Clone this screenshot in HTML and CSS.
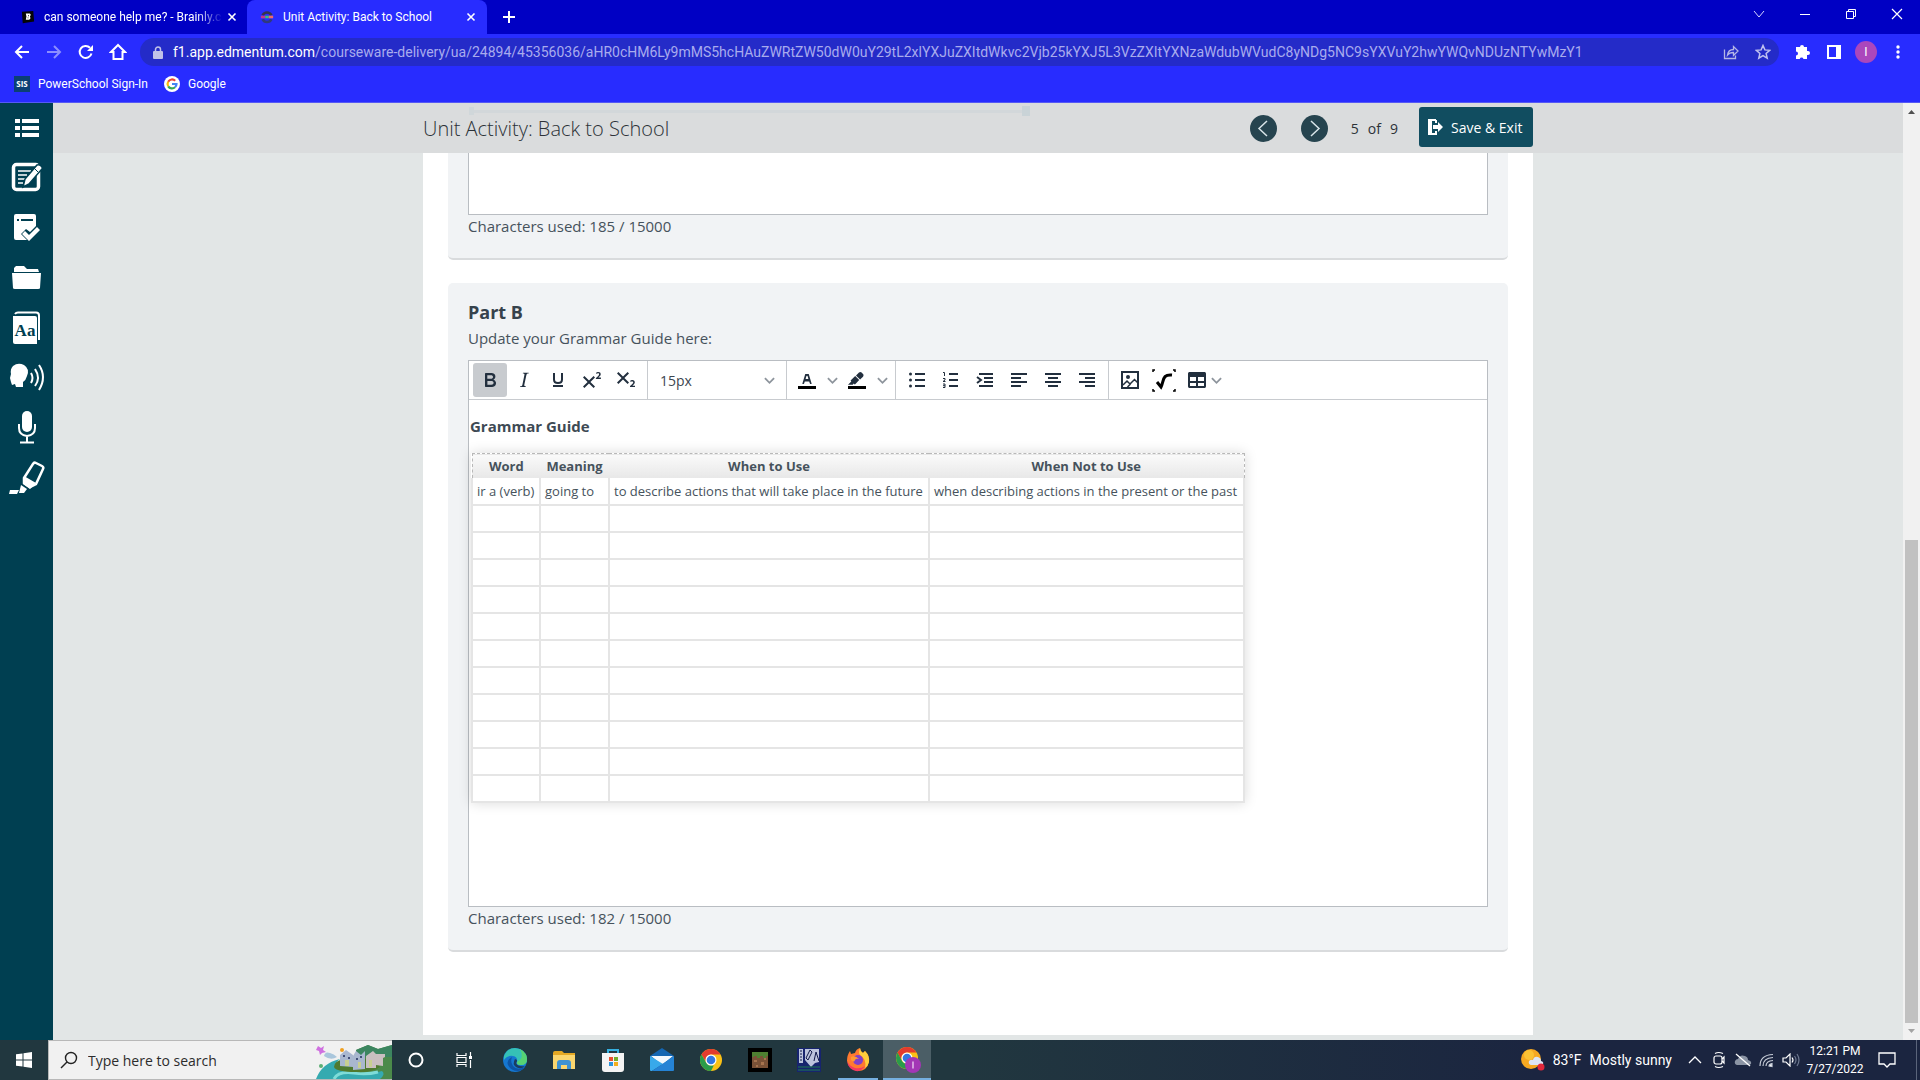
FILE: index.html
```html
<!DOCTYPE html>
<html lang="en">
<head>
<meta charset="utf-8">
<title>Unit Activity: Back to School</title>
<link rel="stylesheet" href="styles.css">
</head>
<body>
<header class="browser">
  <div class="tabstrip">
    <div class="tab">
      <svg class="favicon" viewBox="0 0 16 16"><path d="M1 2l13-1 1 12-13 2z" fill="#050505"/><path d="M5.500 4h4.500q1.500.5 1 2l-.8 1.500q1.600 3-1.200 3.500H5.500l.7-3.500z" fill="#fff"/><path d="M8 6h1v1H8zM7.500 8.500h1v1h-1z" fill="#050505"/></svg>
      <span class="tab-title tab-fade">can someone help me? - Brainly.c</span>
      <button class="plain" aria-label="Close tab"><svg width="10" height="10" viewBox="0 0 10 10"><path d="M1.500 1.500l7 7M8.500 1.500l-7 7" stroke="#fff" stroke-width="1.600"/></svg></button>
    </div>
    <div class="tab tab-active">
      <svg class="favicon" viewBox="0 0 16 16" fill="none" stroke-width="3"><path d="M3 6a5.500 5.500 0 0 1 10 0" stroke="#35344f"/><path d="M3 10.500a5.500 5.500 0 0 0 10 0" stroke="#303a7c"/><path d="M1 8h5" stroke="#c2388f"/><path d="M6 8h4" stroke="#3bc07c"/><path d="M10 8h5" stroke="#ed6b68"/></svg>
      <span class="tab-title">Unit Activity: Back to School</span>
      <button class="plain" aria-label="Close tab"><svg width="10" height="10" viewBox="0 0 10 10"><path d="M1.500 1.500l7 7M8.500 1.500l-7 7" stroke="#fff" stroke-width="1.600"/></svg></button>
    </div>
    <button class="plain newtab" aria-label="New tab"><svg width="12" height="12" viewBox="0 0 12 12"><path d="M6 0v12M0 6h12" stroke="#fff" stroke-width="2"/></svg></button>
    <div class="winctl">
      <button class="plain" aria-label="Search tabs"><svg width="12" height="12" viewBox="0 0 12 12"><path d="M1 3l5 6 5-6" fill="none" stroke="#d5d5ff"/></svg></button>
      <button class="plain" aria-label="Minimize"><svg width="12" height="12" viewBox="0 0 12 12"><path d="M1 6.500h10" stroke="#fff"/></svg></button>
      <button class="plain" aria-label="Restore"><svg width="12" height="12" viewBox="0 0 12 12"><path d="M1.500 3.500h7v7h-7zM3.500 3.500v-2h7v7h-2" fill="none" stroke="#fff"/></svg></button>
      <button class="plain" aria-label="Close"><svg width="12" height="12" viewBox="0 0 12 12"><path d="M1 1l10 10M11 1L1 11" stroke="#fff" stroke-width="1.200"/></svg></button>
    </div>
  </div>
  <nav class="toolbar">
    <button class="plain nav" aria-label="Back"><svg width="16" height="16" viewBox="0 0 16 16"><path d="M15 8H2M8 2L2 8l6 6" fill="none" stroke="#fff" stroke-width="2"/></svg></button>
    <button class="plain nav" aria-label="Forward"><svg width="16" height="16" viewBox="0 0 16 16"><path d="M1 8h13M8 2l6 6-6 6" fill="none" stroke="#8c8eff" stroke-width="2"/></svg></button>
    <button class="plain nav" aria-label="Reload"><svg width="16" height="16" viewBox="0 0 16 16"><path d="M13.500 9.500A6 6 0 1 1 12 3.700" fill="none" stroke="#fff" stroke-width="2"/><path d="M15 1v6H9z" fill="#fff"/></svg></button>
    <button class="plain nav" aria-label="Home"><svg width="18" height="18" viewBox="0 0 18 18"><path d="M9 2L2 9h2.500v7h9V9H16z" fill="none" stroke="#fff" stroke-width="2"/></svg></button>
    <div class="omnibox">
      <svg width="10" height="13" viewBox="0 0 10 13"><rect y="5" width="10" height="8" rx="1" fill="#c0c2e8"/><path d="M2.500 5V3.500a2.500 2.500 0 0 1 5 0V5" fill="none" stroke="#c0c2e8" stroke-width="1.500"/></svg>
      <label class="host" for="url">f1.app.edmentum.com</label>
      <input id="url" class="url" type="text" value="/courseware-delivery/ua/24894/45356036/aHR0cHM6Ly9mMS5hcHAuZWRtZW50dW0uY29tL2xlYXJuZXItdWkvc2Vjb25kYXJ5L3VzZXItYXNzaWdubWVudC8yNDg5NC9sYXVuY2hwYWQvNDUzNTYwMzY1">
      <button class="plain nav" aria-label="Share"><svg width="16" height="16" viewBox="0 0 16 16" fill="none" stroke="#b4b6e6" stroke-width="1.300"><path d="M1.500 5.500v9h11v-3"/><path d="M4.500 11c.5-4 3-5.500 6-5.500V2.500l4.500 4.500-4.500 4.500V8.500c-3 0-4.500.5-6 2.500z"/></svg></button>
      <button class="plain nav" aria-label="Bookmark"><svg width="16" height="16" viewBox="0 0 16 16"><path d="M8 1.500l1.900 4.400 4.800.4-3.600 3.200 1.100 4.700L8 11.700l-4.200 2.500 1.100-4.700L1.300 6.300l4.800-.4z" fill="none" stroke="#c0c2f0" stroke-width="1.500"/></svg></button>
    </div>
    <button class="plain nav" aria-label="Extensions"><svg width="16" height="16" viewBox="0 0 16 16"><path d="M6 3a2 2 0 0 1 4 0h3v4h1a2 2 0 0 1 0 4h-1v4H9.500a2 2 0 0 0-3.800 0H2v-3.500a2 2 0 0 0 0-4V3z" fill="#fff"/></svg></button>
    <button class="plain nav" aria-label="Side panel"><svg width="14" height="14" viewBox="0 0 14 14"><path d="M1 1h12v12H1z" fill="none" stroke="#fff" stroke-width="2"/><path d="M9 1h4v12H9z" fill="#fff"/></svg></button>
    <button class="plain nav" aria-label="Profile"><span class="avatar">I</span></button>
    <button class="plain nav" aria-label="Menu"><svg width="4" height="14" viewBox="0 0 4 14" fill="#fff"><circle cx="2" cy="2" r="1.700"/><circle cx="2" cy="7" r="1.700"/><circle cx="2" cy="12" r="1.700"/></svg></button>
  </nav>
  <nav class="bookmarks">
    <a href="#"><svg width="16" height="16" viewBox="0 0 16 16"><rect width="16" height="16" fill="#0b3f74"/><text x="8" y="11" class="sis">SIS</text></svg>PowerSchool Sign-In</a>
    <a href="#"><svg width="16" height="16" viewBox="0 0 16 16" fill="none" stroke-width="2.200"><circle cx="8" cy="8" r="8" fill="#fff"/><path d="M4.200 5.700a4.500 4.500 0 0 1 7-1" stroke="#ea4335"/><path d="M4.200 10.300a4.500 4.500 0 0 1 0-4.600" stroke="#fbbc05"/><path d="M4.200 10.300a4.500 4.500 0 0 0 6.800 1" stroke="#34a853"/><path d="M8 8h4.500a4.500 4.500 0 0 1-1.500 3.300" stroke="#4285f4"/></svg>Google</a>
  </nav>
</header>

<div class="viewport">
  <aside class="rail">
    <button class="plain" aria-label="Contents"><svg viewBox="0 0 54 50" fill="#fff"><path d="M15 16h5v4h-5zM22 16h17v4H22zM15 23h5v4h-5zM22 23h17v4H22zM15 30h5v4h-5zM22 30h17v4H22z"/></svg></button>
    <button class="plain" aria-label="Notes"><svg viewBox="0 0 54 50"><rect x="13.500" y="11.500" width="25" height="25" rx="3" fill="none" stroke="#fff" stroke-width="3.500"/><path d="M18 18h13M18 22h9M18 26h7M18 30h5" stroke="#fff" stroke-width="1.500"/><path d="M23 34l2-8 12-14q3-1 5 2 1 2-1 3L29 31z" fill="#fff" stroke="#003f51" stroke-width="1.500"/><path d="M34 15l4 4" stroke="#003f51"/></svg></button>
    <button class="plain" aria-label="Assignments"><svg viewBox="0 0 54 50"><path d="M14 13q0-2 2-2h18q2 0 2 2v10l-6 6-4-3-5 5 6 6H16q-2 0-2-2z" fill="#fff"/><path d="M17 17h2M21 17h12" stroke="#003f51" stroke-width="2"/><path d="M22 31l3-3 4 4 8-8 3 3-11 11z" fill="#fff"/></svg></button>
    <button class="plain" aria-label="Files"><svg viewBox="0 0 54 50" fill="#fff"><path d="M14 19v-4l2-2h8l3 3h11l1 3zM12 20h29l-1 15q0 1-2 1H15q-2 0-2-1z"/></svg></button>
    <button class="plain" aria-label="Dictionary"><svg viewBox="0 0 54 50"><path d="M15 11q1-1.500 3-1.500h18q3 0 3 3V37" fill="none" stroke="#fff" stroke-width="2"/><path d="M13 13h22q2 0 2 2v26H15q-2 0-2-2z" fill="#fff"/><text x="25" y="33" class="rail-aa">Aa</text></svg></button>
    <button class="plain" aria-label="Read aloud"><svg viewBox="0 0 54 50"><path d="M13 13q5-4 11-1 6 4 3 11-1 4-4 6v5h-7l-1-3-3 1-1-3-1-4 1-4q-1-5 2-8z" fill="#fff"/><path d="M31 20q3 5 0 10M35 16q6 9 0 17M39 12q8 12 0 25" fill="none" stroke="#fff" stroke-width="2"/></svg></button>
    <button class="plain" aria-label="Record"><svg viewBox="0 0 54 50"><rect x="22" y="8" width="10" height="21" rx="5" fill="#fff"/><path d="M19 21v4q0 7 8 8 8-1 8-8v-4M27 33v6M20 39.500h14" fill="none" stroke="#fff" stroke-width="2"/></svg></button>
    <button class="plain" aria-label="Highlighter"><svg viewBox="0 0 54 50"><path d="M24 25l9-14q1-2 3-1l6 3q2 1 1 3l-7 15-6 3-6-4z" fill="none" stroke="#fff" stroke-width="2.500"/><path d="M24 23l12 7-6 6-7-5zM21 32l6 4-3 4h-5zM10 37h9l-2 4H9z" fill="#fff"/></svg></button>
  </aside>

  <main class="page">
    <div class="topbar">
      <div class="topbar-inner">
        <h1>Unit Activity: Back to School</h1>
        <div class="pager">
          <button class="round" aria-label="Previous"><svg width="27" height="27" viewBox="0 0 27 27"><path d="M17 6l-8 7.500 8 7.500" fill="none" stroke="#d8e4e8" stroke-width="1.500"/></svg></button>
          <button class="round" aria-label="Next"><svg width="27" height="27" viewBox="0 0 27 27"><path d="M10 6l8 7.500-8 7.500" fill="none" stroke="#d8e4e8" stroke-width="1.500"/></svg></button>
        </div>
        <div class="count"><span>5</span><span>of</span><span>9</span></div>
        <button class="save"><svg width="16" height="16" viewBox="0 0 16 16" fill="none"><path d="M8 1H1v14h7v-3M8 1v3" stroke="#fff" stroke-width="2"/><path d="M1 1h3v14H1z" fill="#fff"/><path d="M5 6h5V3l5 5-5 5v-3H5z" fill="#fff"/></svg>Save &amp; Exit</button>
      </div>
    </div>

    <article class="sheet">
      <section class="card card-first">
        <div class="answer"></div>
        <p class="chars">Characters used: 185 / 15000</p>
      </section>

      <section class="card">
        <h2>Part B</h2>
        <p class="prompt">Update your Grammar Guide here:</p>
        <div class="editor">
          <div class="tools">
            <div class="group">
              <button class="tool on" aria-label="Bold"><svg viewBox="0 0 24 24"><path d="M7.800 19c-.3 0-.5 0-.6-.2l-.2-.5V5.700c0-.2 0-.4.2-.5l.6-.2h5c1.500 0 2.700.3 3.500 1 .7.6 1.100 1.400 1.100 2.500a3 3 0 0 1-.6 1.900c-.4.6-1 1-1.600 1.200.4.1.9.3 1.300.6s.8.7 1 1.200c.4.4.5 1 .5 1.600 0 1.300-.4 2.300-1.300 3-.8.7-2.100 1-3.800 1H7.800zm5-8.300c.6 0 1.200-.1 1.600-.5.4-.3.6-.7.6-1.300 0-1.100-.8-1.700-2.300-1.700H9.300v3.500h3.400zm.5 6c.7 0 1.300-.1 1.700-.4.4-.4.6-.9.6-1.500s-.2-1-.7-1.400c-.4-.3-1-.4-2-.4H9.400v3.800h4z" fill-rule="evenodd"/></svg></button>
              <button class="tool" aria-label="Italic"><svg viewBox="0 0 24 24"><path d="M16.700 4.700l-.1.900h-.3c-.6 0-1 0-1.400.3-.3.3-.4.6-.5 1.100l-2.100 9.800v.6c0 .5.4.8 1.400.8h.2l-.2.8H8l.2-.8h.2c1.100 0 1.800-.5 2-1.500l2-9.800.1-.5c0-.6-.4-.8-1.400-.8h-.3l.2-.9h5.800z"/></svg></button>
              <button class="tool" aria-label="Underline"><svg viewBox="0 0 24 24"><path d="M8 5v6.500q0 3.500 4 3.500t4-3.500V5M7 18h10" fill="none" stroke="#222f3e" stroke-width="2"/></svg></button>
              <button class="tool" aria-label="Superscript"><svg viewBox="0 0 24 24"><path d="M15 9.400L10.400 14l4.600 4.600-1.400 1.400L9 15.400 4.400 20 3 18.600 7.600 14 3 9.400 4.400 8 9 12.600 13.600 8 15 9.400zm5.900 1.600h-5v-1l1-.8 1.700-1.600c.3-.5.5-.9.5-1.300 0-.3 0-.5-.2-.7-.2-.2-.5-.3-.9-.3l-.8.2-.7.4-.4-1.200c.2-.2.5-.4 1-.5.3-.2.8-.2 1.200-.2.8 0 1.400.2 1.800.6.4.4.6 1 .6 1.600 0 .5-.2 1-.5 1.500l-1.300 1.400-.6.5h2.600V11z"/></svg></button>
              <button class="tool" aria-label="Subscript"><svg viewBox="0 0 24 24"><path d="M10.400 10l4.600 4.600-1.400 1.400L9 11.400 4.400 16 3 14.600 7.600 10 3 5.400 4.400 4 9 8.600 13.600 4 15 5.400zM21 19h-5v-1l1-.8 1.700-1.600c.3-.4.5-.8.5-1.200 0-.3 0-.6-.2-.7-.2-.2-.5-.3-.9-.3a2 2 0 0 0-.8.200l-.7.3-.4-1.100c.2-.2.500-.4 1-.5.3-.2.8-.2 1.200-.2.800 0 1.400.2 1.800.6.400.400.600 1 .600 1.600 0 .500-.200 1-.500 1.500l-1.300 1.400-.600.500h2.600V19z"/></svg></button>
            </div>
            <div class="group group-size">
              <select class="size" aria-label="Font size"><option>15px</option></select>
              <svg class="chev" viewBox="0 0 12 12"><path d="M1 3.500l5 5 5-5"/></svg>
            </div>
            <div class="group">
              <button class="tool split" aria-label="Text color"><svg viewBox="0 0 24 24"><path d="M3 18h18v3H3z" fill="#000"/><path d="M8.700 16h-.8a.5.5 0 0 1-.5-.6l2.700-9c.1-.3.3-.4.500-.4h2.800c.200 0 .400.100.500.400l2.700 9a.5.500 0 0 1-.500.600h-.800a.5.500 0 0 1-.400-.400l-.700-2.200H9.800l-.7 2.200c0 .3-.2.4-.4.400zm2.600-7.600l-.600 2a.5.500 0 0 0 .500.600h1.600a.5.500 0 0 0 .500-.600l-.600-2a.700.700 0 0 0-1.400 0z" fill-rule="evenodd"/></svg><svg class="chev" viewBox="0 0 12 12"><path d="M1 3.500l5 5 5-5"/></svg></button>
              <button class="tool split" aria-label="Highlight color"><svg viewBox="0 0 24 24"><path d="M3 18h18v3H3z" fill="#000"/><path d="M7.700 16.700H3l3.300-3.300-.7-.8L10.200 8l4 4.100-4 4.200c-.2.2-.6.2-.8 0l-.6-.7-1.100 1.100zm5-7.500L11 7.400l3-2.900a2 2 0 0 1 2.600 0L18 6c.7.7.7 2 0 2.700l-2.900 2.900-1.800-1.800-.500-.6"/></svg><svg class="chev" viewBox="0 0 12 12"><path d="M1 3.500l5 5 5-5"/></svg></button>
            </div>
            <div class="group">
              <button class="tool" aria-label="Bulleted list"><svg viewBox="0 0 24 24"><path d="M10 5h10v2h-10zM10 11h10v2h-10zM10 17h10v2h-10z"/><circle cx="5.500" cy="6" r="1.500"/><circle cx="5.500" cy="12" r="1.500"/><circle cx="5.500" cy="18" r="1.500"/></svg></button>
              <button class="tool" aria-label="Numbered list"><svg viewBox="0 0 24 24"><path d="M10 5h9v2h-9zM10 11h9v2h-9zM10 17h9v2h-9z"/><path d="M4 4.500h1.500V8M4 10.500h2V12L4 13.500h2.500M4 16h2v3.500H4M4 17.700h2" fill="none" stroke="#222f3e"/></svg></button>
              <button class="tool" aria-label="Indent"><svg viewBox="0 0 24 24"><path d="M6 5h14v2H6zM11 9h9v2h-9zM11 13h9v2h-9zM6 17h14v2H6z"/><path d="M4 9l4 3-4 3" fill="none" stroke="#222f3e" stroke-width="2"/></svg></button>
              <button class="tool" aria-label="Align left"><svg viewBox="0 0 24 24"><path d="M4 5h16v2H4zM4 9h10v2H4zM4 13h16v2H4zM4 17h10v2H4z"/></svg></button>
              <button class="tool" aria-label="Align center"><svg viewBox="0 0 24 24"><path d="M4 5h16v2H4zM7 9h10v2H7zM4 13h16v2H4zM7 17h10v2H7z"/></svg></button>
              <button class="tool" aria-label="Align right"><svg viewBox="0 0 24 24"><path d="M4 5h16v2H4zM10 9h10v2H10zM4 13h16v2H4zM10 17h10v2H10z"/></svg></button>
            </div>
            <div class="group group-last">
              <button class="tool" aria-label="Image"><svg viewBox="0 0 24 24"><path d="M4 4h16v16H4z" fill="none" stroke="#222f3e" stroke-width="2"/><path d="M5 17l4-4 3 3 4.500-4.500L20 15M9.500 19l3-3" fill="none" stroke="#222f3e" stroke-width="1.500"/><circle cx="10" cy="9" r="2"/></svg></button>
              <button class="tool" aria-label="Equation"><svg viewBox="0 0 24 24" fill="none" stroke="#000"><path d="M5 14l4 5c3-6 1-13 11-12" stroke-width="3"/><path d="M1 4V2h2M21 2h2v2M23 21v2h-2M3 23H1v-2" stroke-width="1.500"/></svg></button>
              <button class="tool split" aria-label="Table"><svg viewBox="0 0 24 24"><path d="M5 4h14c1.500 0 2 .5 2 2v12c0 1.500-.5 2-2 2H5c-1.500 0-2-.5-2-2V6c0-1.500.5-2 2-2zm0 5v4h6V9zm8 0v4h6V9zm-8 6v3h6v-3zm8 0v3h6v-3z" fill-rule="evenodd"/></svg><svg class="chev" viewBox="0 0 12 12"><path d="M1 3.500l5 5 5-5"/></svg></button>
            </div>
          </div>
          <div class="doc" contenteditable="true" spellcheck="false">
            <p>Grammar Guide</p>
            <table>
              <thead>
                <tr><th class="c-word">Word</th><th class="c-mean">Meaning</th><th class="c-use">When to Use</th><th class="c-not">When Not to Use</th></tr>
              </thead>
              <tbody>
                <tr><td>ir a (verb)</td><td>going to</td><td>to describe actions that will take place in the future</td><td>when describing actions in the present or the past</td></tr>
                <tr><td></td><td></td><td></td><td></td></tr>
                <tr><td></td><td></td><td></td><td></td></tr>
                <tr><td></td><td></td><td></td><td></td></tr>
                <tr><td></td><td></td><td></td><td></td></tr>
                <tr><td></td><td></td><td></td><td></td></tr>
                <tr><td></td><td></td><td></td><td></td></tr>
                <tr><td></td><td></td><td></td><td></td></tr>
                <tr><td></td><td></td><td></td><td></td></tr>
                <tr><td></td><td></td><td></td><td></td></tr>
                <tr><td></td><td></td><td></td><td></td></tr>
                <tr><td></td><td></td><td></td><td></td></tr>
              </tbody>
            </table>
          </div>
        </div>
        <p class="chars">Characters used: 182 / 15000</p>
      </section>
    </article>
  </main>

  <div class="scroll">
    <svg width="17" height="17" viewBox="0 0 17 17"><path d="M5 11l3.500-4 3.500 4z" fill="#505050"/></svg>
    <div class="track"><div class="thumb"></div></div>
    <svg width="17" height="17" viewBox="0 0 17 17"><path d="M5 6l3.500 4L12 6z" fill="#a3a3a3"/></svg>
  </div>
</div>

<footer class="taskbar">
  <button class="plain start" aria-label="Start"><svg width="16" height="16" viewBox="0 0 16 16" fill="#fff"><path d="M0 2.300L6.500 1.400v6.100H0zM7.500 1.200L16 0v7.500H7.500zM0 8.500h6.500v6.100L0 13.700zM7.500 8.500H16V16l-8.500-1.200z"/></svg></button>
  <div class="search">
    <svg width="18" height="18" viewBox="0 0 18 18" fill="none" stroke="#222" stroke-width="1.400"><circle cx="11" cy="7" r="5.500"/><path d="M7 11l-6 6"/></svg>
    <input type="text" aria-label="Search" placeholder="Type here to search">
    <svg width="80" height="38" viewBox="0 0 80 38">
      <path d="M44 9l12-5 10 4 14-4v34H26l20-16z" fill="#4b8a4a"/><path d="M44 9l12-5 10 4 14-4v12H46z" fill="#3c8560"/>
      <path d="M4 38Q10 22 28 18q-10 8 4 12 20 5 38 0 4 3-2 8z" fill="#35aab0"/><path d="M22 38q4-8 20-6 12 2 24-1" fill="none" stroke="#7fdcd8" stroke-width="3"/>
      <path d="M22 26q0-6 10-8h30l6 8q-8 6-24 5-20 0-22-5z" fill="#4f7a2f"/>
      <path d="M28 25V14l6-5 7 5v12zM41 29V15l3-5 5 4 4-4v18z" fill="#a9b7cf"/><path d="M54 27V15l7-5 3 3v14zM64 24V13h9v3l-2 1v8z" fill="#c9bfc0"/>
      <path d="M33 25v-6h4v6zM46 27v-6h3v6zM57 26v-7h3v7z" fill="#c8cf90"/><path d="M31 15h2M36 17h2M44 18h2M48 16h2" stroke="#43507a" stroke-width="2"/>
      <path d="M12 15q1-5 6-3 4 1 7 4-6 4-13-1z" fill="#a9c6dc"/><path d="M6 5l3 2 3-2-1 4 3 2-4 1-2 2-1-4-3-1z" fill="#cf70e0"/><circle cx="30" cy="9" r="2" fill="#f0a020"/><circle cx="9" cy="25" r="2" fill="#5cae74"/>
    </svg>
  </div>
  <button class="plain app" aria-label="Cortana"><svg width="16" height="16" viewBox="0 0 16 16"><circle cx="8" cy="8" r="6.500" fill="none" stroke="#fff" stroke-width="2"/></svg></button>
  <button class="plain app" aria-label="Task view"><svg width="16" height="16" viewBox="0 0 16 16" fill="none" stroke="#fff" stroke-width="1.200"><path d="M1 1v2.500h9V1M1 15v-2.500h9V15M1 5.500h9v5H1zM14.500 0v4M14.500 8v8"/><path d="M13 4h3v3h-3z" fill="#fff" stroke="none"/></svg></button>
  <div class="apps">
    <button class="plain app" aria-label="Edge"><svg width="24" height="24" viewBox="0 0 24 24"><circle cx="12" cy="12" r="12" fill="#1577d0"/><path d="M1 8Q4 0 12 0q11 1 12 11 0 6-6 6-5 0-4-3 1-5-4-6-6-1-9 4z" fill="#35c1b6"/><path d="M17 1q7 4 7 10 0 6-6 6-5 0-4-3 8-4 3-13z" fill="#56d273"/><path d="M9 9q-6 3-4 8 3 6 10 6 5-1 7-4-8 4-12-1-3-4-1-9z" fill="#0d54a5"/><path d="M14 12q0 3-1 3 2 4 9 3-4 4-9 1-4-3-1-8z" fill="#1b3c60"/></svg></button>
    <button class="plain app" aria-label="File Explorer"><svg width="22" height="20" viewBox="0 0 22 20"><path d="M0 3q0-2 2-2h7l2 2h11v15H0z" fill="#e5a823"/><path d="M0 5h22v14H0z" fill="#fbd66e"/><path d="M4 19v-6q0-3 3-3h8q3 0 3 3v6h-4v-4H8v4z" fill="#3e92d2"/></svg></button>
    <button class="plain app" aria-label="Store"><svg width="24" height="24" viewBox="0 0 24 24"><path d="M7 5V2h10v3" fill="none" stroke="#36b0e0" stroke-width="2"/><path d="M1 5h22v16q0 3-3 3H4q-3 0-3-3z" fill="#f4f4f4"/><path d="M8 9h4v4H8z" fill="#e8502f"/><path d="M13 9h4v4h-4z" fill="#72ae2b"/><path d="M8 14h4v4H8z" fill="#2a94dc"/><path d="M13 14h4v4h-4z" fill="#f2ae1b"/></svg></button>
    <button class="plain app" aria-label="Mail"><svg width="24" height="24" viewBox="0 0 24 24"><path d="M0 8l12-8 12 8v5H0z" fill="#1466b2"/><path d="M1 8h22L12 17z" fill="#f2f8fd"/><path d="M0 8l13 8-11 7H1q-1 0-1-1z" fill="#38a9ea"/><path d="M24 8L2 23h21q1 0 1-1z" fill="#2583d5"/></svg></button>
    <button class="plain app" aria-label="Chrome"><svg width="22" height="22" viewBox="0 0 24 24"><circle cx="12" cy="12" r="12" fill="#fbc116"/><path d="M1.600 6A12 12 0 0 1 22.400 6H12a6 6 0 0 0-5 9z" fill="#e33b2e"/><path d="M1.600 6l5.200 9q2 3 5.200 3h3l-3 6A12 12 0 0 1 1.600 6z" fill="#2a9c4a"/><circle cx="12" cy="12" r="6" fill="#fff"/><circle cx="12" cy="12" r="4.700" fill="#3577e0"/></svg></button>
    <button class="plain app" aria-label="Minecraft"><svg width="24" height="24" viewBox="0 0 24 24"><path d="M0 0h24v24H0z" fill="#000"/><path d="M4 4h16v16H4z" fill="#7a5237"/><path d="M4 4h16v4h-2v2h-3V8h-3v2H9V8H6v1H4z" fill="#4f7f31"/><path d="M6 12h3v2H6zM13 14h3v3h-3zM8 17h2v2H8zM16 10h2v2h-2z" fill="#a5734e"/></svg></button>
    <button class="plain app" aria-label="Geometry"><svg width="24" height="24" viewBox="0 0 24 24"><path d="M0 0h24v24H0z" fill="#17246e"/><path d="M2 1h4v14H2zM8 1h14v13l-4 1-4 4-6-7z" fill="#bcc4dd"/><path d="M3 3h2M3 6h2M3 9h2M3 12h2M9 10l4-8 2 2-4 8zM17 13l2-9 3 9" stroke="#111a4a" fill="none"/><path d="M1 19h22M1 22h22" stroke="#1f7a50"/></svg></button>
    <button class="plain app running" aria-label="Firefox"><svg width="24" height="24" viewBox="0 0 24 24"><path d="M1 13Q1 7 4 3l1 3 4-1q1-4 5-5 0 3 3 5l2-2q5 5 4 11-2 9-11 9-9-1-11-10z" fill="#ff7a2f"/><path d="M14 0q0 3 3 5l2-2q5 5 4 11-1 4-4 6 2-9-5-13-2-2 0-7z" fill="#ffcf3c"/><path d="M1 13q2 5 8 7 6 1 10-2-4 6-9 5-8-2-9-10z" fill="#f23a62"/><circle cx="12" cy="12" r="5" fill="#8040c8"/><path d="M5 9q4-2 8 2-3-1-4 1-1 3-4 0z" fill="#ff9a30"/></svg></button>
    <button class="plain app active" aria-label="Chrome, profile I"><svg width="28" height="28" viewBox="0 0 28 28"><g transform="translate(2 1)"><circle cx="12" cy="12" r="11" fill="#fbc116"/><path d="M2.500 6.500a11 11 0 0 1 19 0H12a6 6 0 0 0-5 9z" fill="#e33b2e"/><path d="M2.500 6.500L7 15q2 3 5 3h3l-3 5A11 11 0 0 1 2.500 6.500z" fill="#2a9c4a"/><circle cx="12" cy="12" r="5.500" fill="#fff"/><circle cx="12" cy="12" r="4.300" fill="#3577e0"/></g><circle cx="20" cy="20" r="8" fill="#a336b5"/><path d="M20 16.500v7" stroke="#e8c8ee" stroke-width="1.400"/></svg></button>
  </div>
  <div class="tray">
    <div class="weather"><svg width="24" height="24" viewBox="0 0 24 24"><circle cx="10" cy="11" r="10" fill="#f6a821"/><circle cx="8" cy="7" r="5" fill="#fbc234"/><path d="M10 17q-3-1-2-4 2-2 4-1 1-4 5-3 3 1 3 4 3 1 2 3-1 2-3 1z" fill="#dde5f5"/><circle cx="20" cy="19" r="3.500" fill="#e0283c"/></svg><span>83°F</span><span>Mostly sunny</span></div>
    <button class="plain" aria-label="Hidden icons"><svg width="14" height="14" viewBox="0 0 14 14"><path d="M1 10l6-6 6 6" fill="none" stroke="#fff" stroke-width="1.300"/></svg></button>
    <button class="plain" aria-label="Meet now"><svg width="14" height="18" viewBox="0 0 14 18" fill="none" stroke="#fff" stroke-width="1.200"><rect x="2" y="5" width="8" height="8" rx="2"/><path d="M10 8l2-2v6l-2-2M3 2.500q3.500-2 8 0M3 15.500q3.500 2 8 0"/></svg></button>
    <button class="plain" aria-label="OneDrive"><svg width="18" height="14" viewBox="0 0 18 14"><path d="M3 12q-3-1-2-4 1-2 3-2 2-5 7-3 3 1 3 4 4 1 3 4l-2 1z" fill="#8b94a4"/><path d="M2 1l14 12" stroke="#fff" stroke-width="1.300"/></svg></button>
    <button class="plain" aria-label="Network"><svg width="16" height="16" viewBox="0 0 16 16" fill="none" stroke="#c5cbd6" stroke-width="1.200"><path d="M1 14Q1 3 14 2.500M4 14q0-8 10-8.500M7 14q0-5 7-5.500"/><path d="M10 14q0-2 3-2.500v3z" fill="#fff"/></svg></button>
    <button class="plain" aria-label="Volume"><svg width="18" height="14" viewBox="0 0 18 14" fill="none" stroke="#fff" stroke-width="1.200"><path d="M1 5h3l4-4v12L4 9H1z"/><path d="M10 4.500q2 2.500 0 5"/><path d="M12.500 3q3 4 0 8M15 1q4 6 0 12" stroke="#6d7890"/></svg></button>
    <div class="clock"><span>12:21 PM</span><span>7/27/2022</span></div>
    <button class="plain note" aria-label="Notifications"><svg width="18" height="18" viewBox="0 0 18 18"><path d="M1 2h16v11h-5l-3 3-3-3H1z" fill="none" stroke="#fff" stroke-width="1.300"/></svg></button>
  </div>
</footer>
</body>
</html>
```
FILE: styles.css
```css
* { box-sizing: border-box; }

body {
  margin: 0;
  height: 100vh;
  display: flex;
  flex-direction: column;
  overflow: hidden;
  font-family: "Open Sans", "Noto Sans", sans-serif;
  color: #46525c;
}

h1, h2, p { margin: 0; }
svg { flex: none; }
button, input, select { font-family: inherit; }

.plain {
  display: flex;
  align-items: center;
  justify-content: center;
  padding: 0;
  border: 0;
  background: none;
}

/* Browser frame */
.browser {
  flex: none;
  background: #282cff;
  border-bottom: 1px solid #5559f5;
  color: #fff;
  font-family: Roboto, "Open Sans", sans-serif;
  font-size: 12px;
}

.tabstrip {
  display: flex;
  height: 34px;
  background: #0000c4;
}

.tab {
  display: flex;
  align-items: center;
  width: 247px;
  padding: 0 10px 0 21px;
}

.tab-active {
  width: 240px;
  background: #282cff;
  border-radius: 8px 8px 0 0;
  padding: 0 11px 0 13px;
}

.favicon { width: 14px; height: 14px; }

.tab-title {
  flex: 1;
  margin: 0 4px 0 9px;
  white-space: nowrap;
}

.tab-fade { mask-image: linear-gradient(90deg, #000 85%, transparent); }
.tab .plain { width: 10px; }
.newtab { width: 44px; }
.winctl { display: flex; margin-left: auto; }
.winctl .plain { width: 46px; height: 28px; }

.toolbar {
  display: flex;
  align-items: center;
  height: 36px;
  padding: 0 6px;
}

.nav { width: 32px; height: 28px; flex: none; }

.omnibox {
  flex: 1;
  display: flex;
  align-items: center;
  height: 28px;
  margin: 0 7px 0 6px;
  padding-left: 13px;
  border-radius: 14px;
  background: #242bc8;
  font-size: 14px;
}

.host { margin-left: 10px; }

.url {
  flex: 1;
  min-width: 0;
  padding: 0;
  border: 0;
  background: none;
  color: #a9abee;
  font-size: 14px;
}

.avatar {
  width: 22px;
  height: 22px;
  border-radius: 50%;
  background: #ab47bc;
  color: #fff;
  font-size: 12px;
  line-height: 22px;
}

.bookmarks {
  display: flex;
  align-items: center;
  gap: 16px;
  height: 32px;
  padding: 0 14px 4px;
}

.bookmarks a {
  display: flex;
  align-items: center;
  gap: 8px;
  color: #fff;
  text-decoration: none;
}

.sis { font: 700 8px "Open Sans", sans-serif; fill: #fff; text-anchor: middle; }

/* Page area */
.viewport {
  flex: 1;
  min-height: 0;
  display: flex;
  background: #e2e6e6;
}

.rail { width: 53px; background: #003f51; }
.rail svg { width: 54px; height: 50px; }
.rail-aa { font: 700 17px "Liberation Serif", serif; fill: #003f51; text-anchor: middle; }

.page {
  flex: 1;
  min-width: 0;
  display: flex;
  flex-direction: column;
}

.topbar { flex: none; background: #dadcdd; }

.topbar-inner {
  position: relative;
  display: flex;
  align-items: center;
  max-width: 1110px;
  height: 50px;
  margin: 0 auto;
  color: #2c3238;
}

/* Scrolled-under edge showing faintly through the bar */
.topbar-inner::before {
  content: "";
  position: absolute;
  top: 3px;
  left: 46px;
  width: 561px;
  height: 10px;
  background:
    linear-gradient(#c9d3d7, #c9d3d7) right / 8px 10px no-repeat,
    linear-gradient(#d0d7da, #d0d7da) left / 5px 8px no-repeat,
    linear-gradient(#d2d7da, #d2d7da) center / 100% 3px no-repeat;
}

.topbar h1 {
  flex: 1;
  font-size: 20px;
  font-weight: 300;
}

.pager { display: flex; gap: 24px; }

.round {
  width: 27px;
  height: 27px;
  padding: 0;
  border: 0;
  border-radius: 50%;
  background: #26444f;
}

.count {
  display: flex;
  gap: 9px;
  margin: 0 21px 0 23px;
  font-size: 14px;
}

.save {
  display: flex;
  align-items: center;
  gap: 7px;
  width: 114px;
  height: 40px;
  margin-bottom: 2px;
  padding: 0 0 0 9px;
  border: 0;
  border-radius: 3px;
  background: #114d60;
  color: #fff;
  font-size: 14px;
  white-space: nowrap;
}

.sheet {
  flex: 1;
  width: 100%;
  max-width: 1110px;
  margin: 0 auto 5px;
  padding: 0 25px;
  background: #fff;
}

.card {
  margin-bottom: 23px;
  padding: 16px 20px 21px;
  border-bottom: 2px solid #d9dbdd;
  border-radius: 5px;
  background: #f1f3f5;
}

.card-first {
  padding-top: 0;
  border-radius: 0 0 5px 5px;
}

.answer {
  height: 62px;
  border: 1px solid #b9bdc2;
  border-top: 0;
  background: #fff;
}

.chars {
  font-size: 15px;
  line-height: 22px;
}

.card h2 {
  color: #36424c;
  font-size: 18px;
  line-height: 26px;
}

.prompt {
  margin-bottom: 9px;
  font-size: 15px;
  line-height: 26px;
}

/* Rich text editor */
.editor {
  border: 1px solid #b9bdc2;
  background: #fff;
}

.tools {
  display: flex;
  height: 39px;
  border-bottom: 1px solid #c8cbcf;
}

.group {
  display: flex;
  align-items: center;
  padding: 0 4px;
  border-right: 1px solid #c8cbcf;
}

.group-last { border-right: 0; }
.group-size { width: 139px; padding: 0 11px 0 12px; }

.tool {
  display: flex;
  align-items: center;
  justify-content: center;
  width: 34px;
  height: 34px;
  padding: 0;
  border: 0;
  border-radius: 3px;
  background: none;
  fill: #222f3e;
}

.tool svg { width: 24px; height: 24px; }
.split { width: 50px; padding-left: 4px; gap: 8px; justify-content: flex-start; }
.group-last .split { gap: 2px; }
.on { background: #c8cbcf; }

.group .chev {
  width: 11px;
  height: 11px;
  fill: none;
  stroke: #8d949c;
  stroke-width: 2;
}

.size {
  flex: 1;
  appearance: none;
  padding: 0;
  border: 0;
  background: none;
  color: #3c4650;
  font-size: 14px;
}

.doc {
  height: 506px;
  padding: 15px 1px 0;
  outline: 0;
}

.doc p {
  margin-bottom: 16px;
  color: #3e4a54;
  font-size: 15px;
  font-weight: 700;
  line-height: 22px;
}

.doc table {
  width: 774px;
  margin-left: 1px;
  border-collapse: collapse;
  table-layout: fixed;
  box-shadow: 0 0 12px rgba(0, 0, 0, .15);
  font-size: 13px;
}

.doc thead {
  background: linear-gradient(#fafafa, #e8e8e8);
  border: 1px dashed #b8b8b8;
  border-bottom: 0;
}

.doc th {
  height: 24px;
  padding: 0;
}

.doc td {
  height: 27px;
  padding: 0 4px;
  border: 2px solid #e5e5e5;
  background: #fff;
  white-space: nowrap;
}

.doc tbody tr:first-child td { border-top: 0; }

.c-word { width: 68px; }
.c-mean { width: 69px; }
.c-use { width: 320px; }

/* Page scroll bar */
.scroll {
  display: flex;
  flex-direction: column;
  align-items: center;
  width: 17px;
  background: #f1f1f1;
}

.track {
  flex: 1;
  display: flex;
  flex-direction: column;
  justify-content: flex-end;
}

.thumb { width: 13px; height: 53.5%; background: #c1c1c1; }

/* Desktop task bar */
.taskbar {
  flex: none;
  display: flex;
  height: 40px;
  background: linear-gradient(90deg, #21373f 50%, #1b2540 80%);
  color: #fff;
  font-size: 14px;
}

.start { width: 48px; }

.search {
  display: flex;
  align-items: center;
  gap: 10px;
  width: 344px;
  padding-left: 11px;
  border: 1px solid #b8b8b8;
  border-right: 0;
  background: #f1f1f1;
}

.search input {
  flex: 1;
  min-width: 0;
  padding: 0;
  border: 0;
  background: none;
  font-size: 14px;
}

.search input::placeholder { color: #2c2c2c; }

.app { width: 48px; }
.apps { display: flex; gap: 1px; padding-left: 3px; }
.running { background: linear-gradient(#76b0e0, #76b0e0) center bottom / 40px 2px no-repeat; }
.active { background: #4b5e66; border-bottom: 2px solid #76b0e0; }

.tray {
  display: flex;
  align-items: center;
  margin-left: auto;
  padding-right: 3px;
  font-family: Roboto, "Open Sans", sans-serif;
}

.tray .plain { width: 24px; height: 40px; }
.weather { display: flex; align-items: center; gap: 8px; margin-right: 11px; }

.clock {
  display: flex;
  flex-direction: column;
  align-items: center;
  width: 64px;
  font-size: 12px;
  line-height: 18px;
}

.tray .note {
  width: 50px;
  padding-right: 10px;
  border-right: 1px solid #5a647a;
}
```
